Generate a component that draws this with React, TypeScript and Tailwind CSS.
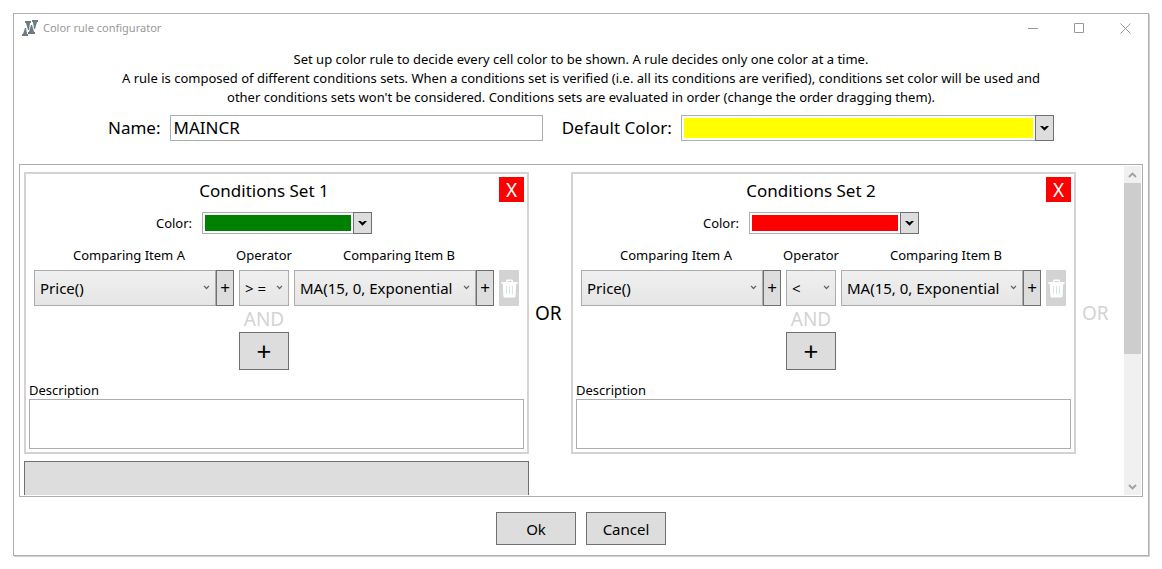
import React, { useState } from "react";
import clsx from "clsx";

type Condition = {
  itemA: string;
  operator: string;
  itemB: string;
};

type ConditionsSet = {
  id: number;
  colorName: string;
  colorClass: string;
  conditions: Condition[];
};

const conditionsSets: ConditionsSet[] = [
  {
    id: 1,
    colorName: "Green",
    colorClass: "bg-[#008000]",
    conditions: [
      { itemA: "Price()", operator: "> =", itemB: "MA(15, 0, Exponential" },
    ],
  },
  {
    id: 2,
    colorName: "Red",
    colorClass: "bg-[#ff0000]",
    conditions: [
      { itemA: "Price()", operator: "<", itemB: "MA(15, 0, Exponential" },
    ],
  },
];

const Logo = () => (
  <svg width="16" height="16" viewBox="0 0 16 16" fill="#6b7b82">
    <path d="M0 16V14H1L3 8H4L5 14H6V16Z" />
    <path d="M3 1H9V3H8L7 10H6L4 3H3Z" />
    <path d="M6 14V12H7L9 5H10L12 12H13V14Z" />
    <path d="M10 0H16V2H15L13 9H12L11 2H10Z" />
  </svg>
);

const Trash = () => (
  <svg width="17" height="19" viewBox="0 0 17 19">
    <path
      d="M5 3V1.800Q5 0.500 6.300 0.500H10.700Q12 0.500 12 1.800V3H16.500V5H15.200L14.600 17Q14.500 18.500 13 18.500H4Q2.500 18.500 2.400 17L1.800 5H0.500V3ZM6.500 3H10.500V2H6.500Z"
      fill="#fff"
      fillRule="evenodd"
    />
    <path d="M5.500 7v8M8.500 7v8M11.500 7v8" stroke="#d3e6ea" />
  </svg>
);

type SelectProps = {
  id: string;
  label: string;
  value: string;
  className?: string;
};

const Select: React.FC<SelectProps> = ({ id, label, value, className }) => (
  <div className={clsx("relative", className)}>
    <select
      id={id}
      aria-label={label}
      defaultValue={value}
      className="h-9 w-full appearance-none border border-[#acacac] bg-linear-to-b from-[#f0f0f0] to-[#e5e5e5] pl-[5px] text-[15px]"
    >
      <option>{value}</option>
    </select>
    <svg
      width="7"
      height="5"
      viewBox="0 0 7 5"
      className="pointer-events-none absolute top-[15px] right-[6px]"
      fill="none"
      stroke="#606060"
      strokeWidth="1.200"
    >
      <path d="M1 0.800L3.500 3.500L6 0.800" />
    </svg>
  </div>
);

type ColorPickerProps = {
  id: string;
  colorName: string;
  colorClass: string;
  className?: string;
};

const ColorPicker: React.FC<ColorPickerProps> = ({
  id,
  colorName,
  colorClass,
  className,
}) => (
  <button
    id={id}
    type="button"
    title={colorName}
    className={clsx("flex bg-white", className)}
  >
    <span className="h-full flex-1 border-y border-l border-[#abadb3] p-0.5">
      <span className={clsx("block h-full", colorClass)} />
    </span>
    <span className="flex h-full w-[19px] items-center justify-center border border-[#707070] bg-[#dddddd]">
      <svg width="9" height="5" viewBox="0 0 9 5">
        <path d="M0 0H2.500L4.500 1.500L6.500 0H9L4.500 4.800Z" />
      </svg>
    </span>
  </button>
);

const PlusButton = ({ label }: { label: string }) => (
  <button
    type="button"
    aria-label={label}
    className="flex h-9 w-[18px] items-center justify-center border border-[#707070] bg-[#dddddd] text-[17px]"
  >
    +
  </button>
);

const ConditionsSetCard = ({ set }: { set: ConditionsSet }) => {
  const [description, setDescription] = useState("");

  return (
    <section className="w-[505px] shrink-0 border-2 border-[#d3d3d3] p-[3px]">
      <div className="flex items-start">
        <h2 className="flex-1 text-center text-[17px] leading-7">
          Conditions Set {set.id}
        </h2>
        <button
          type="button"
          className="size-[25px] bg-[#ff0000] text-[19px] leading-[26px] text-white"
        >
          X
        </button>
      </div>

      <div className="mr-[25px]">
        <div className="mt-[7px] flex items-center justify-center gap-2.5">
          <label htmlFor={`color-${set.id}`} className="pt-0.5">
            Color:
          </label>
          <ColorPicker
            id={`color-${set.id}`}
            colorName={set.colorName}
            colorClass={set.colorClass}
            className="h-[22px] w-[170px]"
          />
        </div>
        <div className="mt-3 grid grid-cols-[1fr_70px_1fr] text-center leading-[18px]">
          <span>Comparing Item A</span>
          <span>Operator</span>
          <span>Comparing Item B</span>
        </div>
      </div>

      {set.conditions.map((condition, i) => (
        <div key={i} className="mt-1.5 flex gap-[5px] px-[5px]">
          <div className="flex flex-1">
            <Select
              id={`item-a-${set.id}-${i}`}
              label="Comparing Item A"
              value={condition.itemA}
              className="flex-1"
            />
            <PlusButton label="Add item A" />
          </div>
          <Select
            id={`operator-${set.id}-${i}`}
            label="Operator"
            value={condition.operator}
            className="w-[50px]"
          />
          <div className="flex flex-1">
            <Select
              id={`item-b-${set.id}-${i}`}
              label="Comparing Item B"
              value={condition.itemB}
              className="flex-1"
            />
            <PlusButton label="Add item B" />
          </div>
          <button
            type="button"
            aria-label="Delete condition"
            className="flex h-9 w-5 items-center justify-center bg-[#d3d3d3]"
          >
            <Trash />
          </button>
        </div>
      ))}

      <div className="mr-[25px] flex flex-col items-center">
        <span className="text-[19px] leading-[26px] text-[#d3d3d3]">AND</span>
        <button
          type="button"
          aria-label="Add condition"
          className="h-[38px] w-[50px] border border-[#707070] bg-[#dddddd] text-[26px] leading-9"
        >
          +
        </button>
      </div>

      <label htmlFor={`description-${set.id}`} className="mt-[11px] block leading-[18px]">
        Description
      </label>
      <textarea
        id={`description-${set.id}`}
        value={description}
        onChange={(e) => setDescription(e.target.value)}
        className="block h-[50px] w-full resize-none border border-[#abadb3] px-1"
      />
    </section>
  );
};

const ScrollBar = () => (
  <div className="flex w-[17px] shrink-0 flex-col bg-[#f0f0f0]">
    <button type="button" aria-label="Scroll up" className="flex h-[17px] items-center justify-center">
      <svg width="9" height="6" viewBox="0 0 9 6" fill="none" stroke="#a0a0a0" strokeWidth="1.800">
        <path d="M1 5L4.500 1.500L8 5" />
      </svg>
    </button>
    <div className="flex-1">
      <div className="h-[58%] bg-[#cdcdcd]" />
    </div>
    <button type="button" aria-label="Scroll down" className="flex h-[17px] items-center justify-center">
      <svg width="9" height="6" viewBox="0 0 9 6" fill="none" stroke="#a0a0a0" strokeWidth="1.800">
        <path d="M1 1L4.500 4.500L8 1" />
      </svg>
    </button>
  </div>
);

const TitleBar = () => (
  <header className="flex h-7 shrink-0 items-center pl-2 text-[#999999]">
    <Logo />
    <h1 className="ml-[5px] flex-1 text-[11px]">Color rule configurator</h1>
    <button type="button" aria-label="Minimize" className="flex w-[46px] justify-center">
      <svg width="11" height="11" viewBox="0 0 11 11" stroke="#999999">
        <path d="M0 5.500H10" />
      </svg>
    </button>
    <button type="button" aria-label="Maximize" className="flex w-[46px] justify-center">
      <svg width="11" height="11" viewBox="0 0 11 11" stroke="#999999" fill="none">
        <path d="M0.500 0.500H9.500V9.500H0.500Z" />
      </svg>
    </button>
    <button type="button" aria-label="Close" className="flex w-[46px] justify-center">
      <svg width="11" height="11" viewBox="0 0 11 11" stroke="#999999">
        <path d="M0.500 0.500L10.500 10.500M10.500 0.500L0.500 10.500" />
      </svg>
    </button>
  </header>
);

const App = () => {
  const [name, setName] = useState("MAINCR");

  return (
    <div className="flex h-screen bg-white p-[13px] font-['Noto_Sans',sans-serif] text-[13px] text-black">
      <main className="flex min-w-0 flex-1 flex-col border border-[#b0b0b0] shadow-[1px_1px_0_#d0d0d0]">
        <TitleBar />

        <p className="mt-2 text-center leading-[19px]">
          Set up color rule to decide every cell color to be shown. A rule
          decides only one color at a time.
          <br />
          A rule is composed of different conditions sets. When a conditions set
          is verified (i.e. all its conditions are verified), conditions set
          color will be used and
          <br />
          other conditions sets won't be considered. Conditions sets are
          evaluated in order (change the order dragging them).
        </p>

        <div className="mt-2 grid grid-cols-[auto_minmax(0,1fr)_auto_minmax(0,1fr)] items-center gap-x-[9px] px-[94px] text-[17px] leading-[26px]">
          <label htmlFor="name">Name:</label>
          <input
            id="name"
            value={name}
            onChange={(e) => setName(e.target.value)}
            className="h-[26px] w-full border border-[#abadb3] px-[3px]"
          />
          <label htmlFor="default-color" className="ml-2.5">
            Default Color:
          </label>
          <ColorPicker
            id="default-color"
            colorName="Yellow"
            colorClass="bg-[#ffff00]"
            className="h-[26px] w-full"
          />
        </div>

        <div className="mx-[5px] mt-[23px] flex min-h-0 flex-1 border border-[#abadb3] p-px">
          <div className="flex min-w-0 flex-1 flex-wrap content-start gap-y-[7px] overflow-hidden pt-1.5 pl-[3px]">
            {conditionsSets.map((set, i) => (
              <div key={set.id} className="flex items-center">
                <ConditionsSetCard set={set} />
                <span
                  className={clsx("w-[42px] pl-1.5 text-[19px]", {
                    "text-[#d3d3d3]": i === conditionsSets.length - 1,
                  })}
                >
                  OR
                </span>
              </div>
            ))}
            <button
              type="button"
              aria-label="Add conditions set"
              className="h-[282px] w-[505px] border border-[#707070] bg-[#dddddd]"
            />
          </div>
          <ScrollBar />
        </div>

        <footer className="flex shrink-0 justify-center gap-2.5 pt-[15px] pb-2.5 text-[15px]">
          <button type="button" className="h-[33px] w-20 border border-[#707070] bg-[#dddddd] pt-0.5">
            Ok
          </button>
          <button type="button" className="h-[33px] w-20 border border-[#707070] bg-[#dddddd] pt-0.5">
            Cancel
          </button>
        </footer>
      </main>
    </div>
  );
};

export default App;
